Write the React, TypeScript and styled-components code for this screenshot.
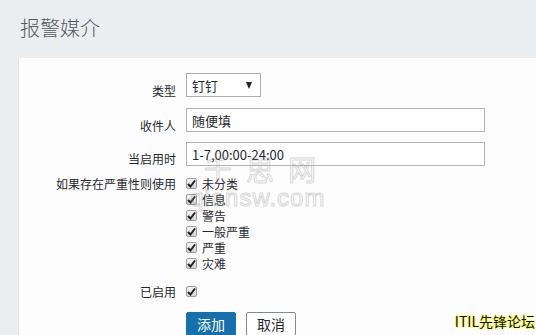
import styled, { createGlobalStyle } from "styled-components";

const GlobalStyle = createGlobalStyle`
  body {
    margin: 0;
    background: #ebeef1;
    font-family: "Noto Sans CJK SC", "Liberation Sans", sans-serif;
    overflow: hidden;
  }
`;

const Page = styled.div`
  position: relative;
  width: 536px;
  height: 335px;
  overflow: hidden;
`;

const Header = styled.h1`
  margin: 0;
  padding: 15px 0 0 20px;
  height: 58px;
  box-sizing: border-box;
  font-size: 20px;
  font-weight: 300;
  color: #555a5e;
  line-height: 26px;
`;

const Panel = styled.div`
  margin-left: 18px;
  background: #fdfdfe;
  border-left: 1px solid #e2e5e8;
  height: 277px;
  padding-top: 15px;
  box-sizing: border-box;
`;

const Form = styled.div`
  display: grid;
  grid-template-columns: 157px 1fr;
  column-gap: 10px;
  align-items: center;
`;

const Label = styled.div<{ $top?: number }>`
  text-align: right;
  font-size: 12px;
  color: #1f2a30;
  align-self: ${(p) => (p.$top !== undefined ? "start" : "center")};
  padding-top: ${(p) => p.$top ?? 0}px;
`;

const Field = styled.div<{ $mb?: number }>`
  display: flex;
  margin-bottom: ${(p) => p.$mb ?? 0}px;
`;

const Select = styled.div`
  width: 75px;
  height: 24px;
  box-sizing: border-box;
  border: 1px solid #acacac;
  background: #fff;
  display: flex;
  align-items: center;
  justify-content: space-between;
  padding: 0 8px 0 5px;
  font-size: 13px;
  color: #1f2a30;
`;

const Arrow = styled.span`
  width: 0;
  height: 0;
  border-left: 3.5px solid transparent;
  border-right: 3.5px solid transparent;
  border-top: 7px solid #222;
`;

const Input = styled.div`
  width: 299px;
  height: 24px;
  box-sizing: border-box;
  border: 1px solid #b4b4b4;
  background: #fff;
  display: flex;
  align-items: center;
  padding-left: 5px;
  font-size: 13px;
  color: #1f2a30;
`;

const CheckList = styled.div`
  display: flex;
  flex-direction: column;
`;

const CheckRow = styled.div`
  display: flex;
  align-items: center;
  gap: 5px;
  height: 16px;
  font-size: 12px;
  color: #1f2a30;
`;

const Box = styled.span`
  width: 11px;
  height: 11px;
  box-sizing: border-box;
  border: 1px solid #9a9a9a;
  border-radius: 2px;
  background: linear-gradient(#f4f4f4, #d6d6d6);
  display: inline-flex;
  align-items: center;
  justify-content: center;
`;

const Buttons = styled.div`
  display: flex;
  gap: 10px;
  margin-top: 12px;
`;

const Button = styled.div<{ $primary?: boolean }>`
  width: 50px;
  height: 24px;
  box-sizing: border-box;
  display: flex;
  align-items: center;
  justify-content: center;
  font-size: 14px;
  border-radius: 2px;
  background: ${(p) => (p.$primary ? "#1570ad" : "#fff")};
  color: ${(p) => (p.$primary ? "#fff" : "#1f2a30")};
  border: 1px solid ${(p) => (p.$primary ? "#1570ad" : "#7f8c96")};
`;

const Watermark = styled.div`
  position: absolute;
  left: 190px;
  top: 158px;
  color: transparent;
  -webkit-text-stroke: 1px rgba(150, 150, 150, 0.4);
  font-family: "Liberation Sans", "Noto Sans CJK SC", sans-serif;
  line-height: 1;
  pointer-events: none;
`;

const WmTop = styled.div`
  font-size: 28px;
  letter-spacing: 14px;
  padding-left: 14px;
`;

const WmBottom = styled.div`
  font-size: 24px;
  letter-spacing: 1px;
`;

const Badge = styled.div`
  position: absolute;
  right: 1px;
  bottom: 4px;
  font-size: 14px;
  color: #111;
  text-shadow: 0 0 2px #ffff33, 0 0 2px #ffff33, 0 0 2px #ffff33;
`;

function Check() {
  return (
    <Box>
      <svg width="9" height="9" viewBox="0 0 9 9">
        <path d="M1 5 L3.5 7.5 L8 1.5" stroke="#222" strokeWidth="2" fill="none" />
      </svg>
    </Box>
  );
}

const severities = ["未分类", "信息", "警告", "一般严重", "严重", "灾难"];

export default function App() {
  return (
    <Page>
      <GlobalStyle />
      <Header>报警媒介</Header>
      <Panel>
        <Form>
          <Label>类型</Label>
          <Field $mb={11}>
            <Select>
              钉钉
              <Arrow />
            </Select>
          </Field>
          <Label>收件人</Label>
          <Field $mb={10}>
            <Input>随便填</Input>
          </Field>
          <Label>当启用时</Label>
          <Field $mb={9}>
            <Input>1-7,00:00-24:00</Input>
          </Field>
          <Label $top={0}>如果存在严重性则使用</Label>
          <Field $mb={12}>
            <CheckList>
              {severities.map((s) => (
                <CheckRow key={s}>
                  <Check />
                  {s}
                </CheckRow>
              ))}
            </CheckList>
          </Field>
          <Label>已启用</Label>
          <Field>
            <CheckRow>
              <Check />
            </CheckRow>
          </Field>
          <div />
          <Buttons>
            <Button $primary>添加</Button>
            <Button>取消</Button>
          </Buttons>
        </Form>
      </Panel>
      <Watermark>
        <WmTop>千思网</WmTop>
        <WmBottom>qiansw.com</WmBottom>
      </Watermark>
      <Badge>ITIL先锋论坛</Badge>
    </Page>
  );
}
